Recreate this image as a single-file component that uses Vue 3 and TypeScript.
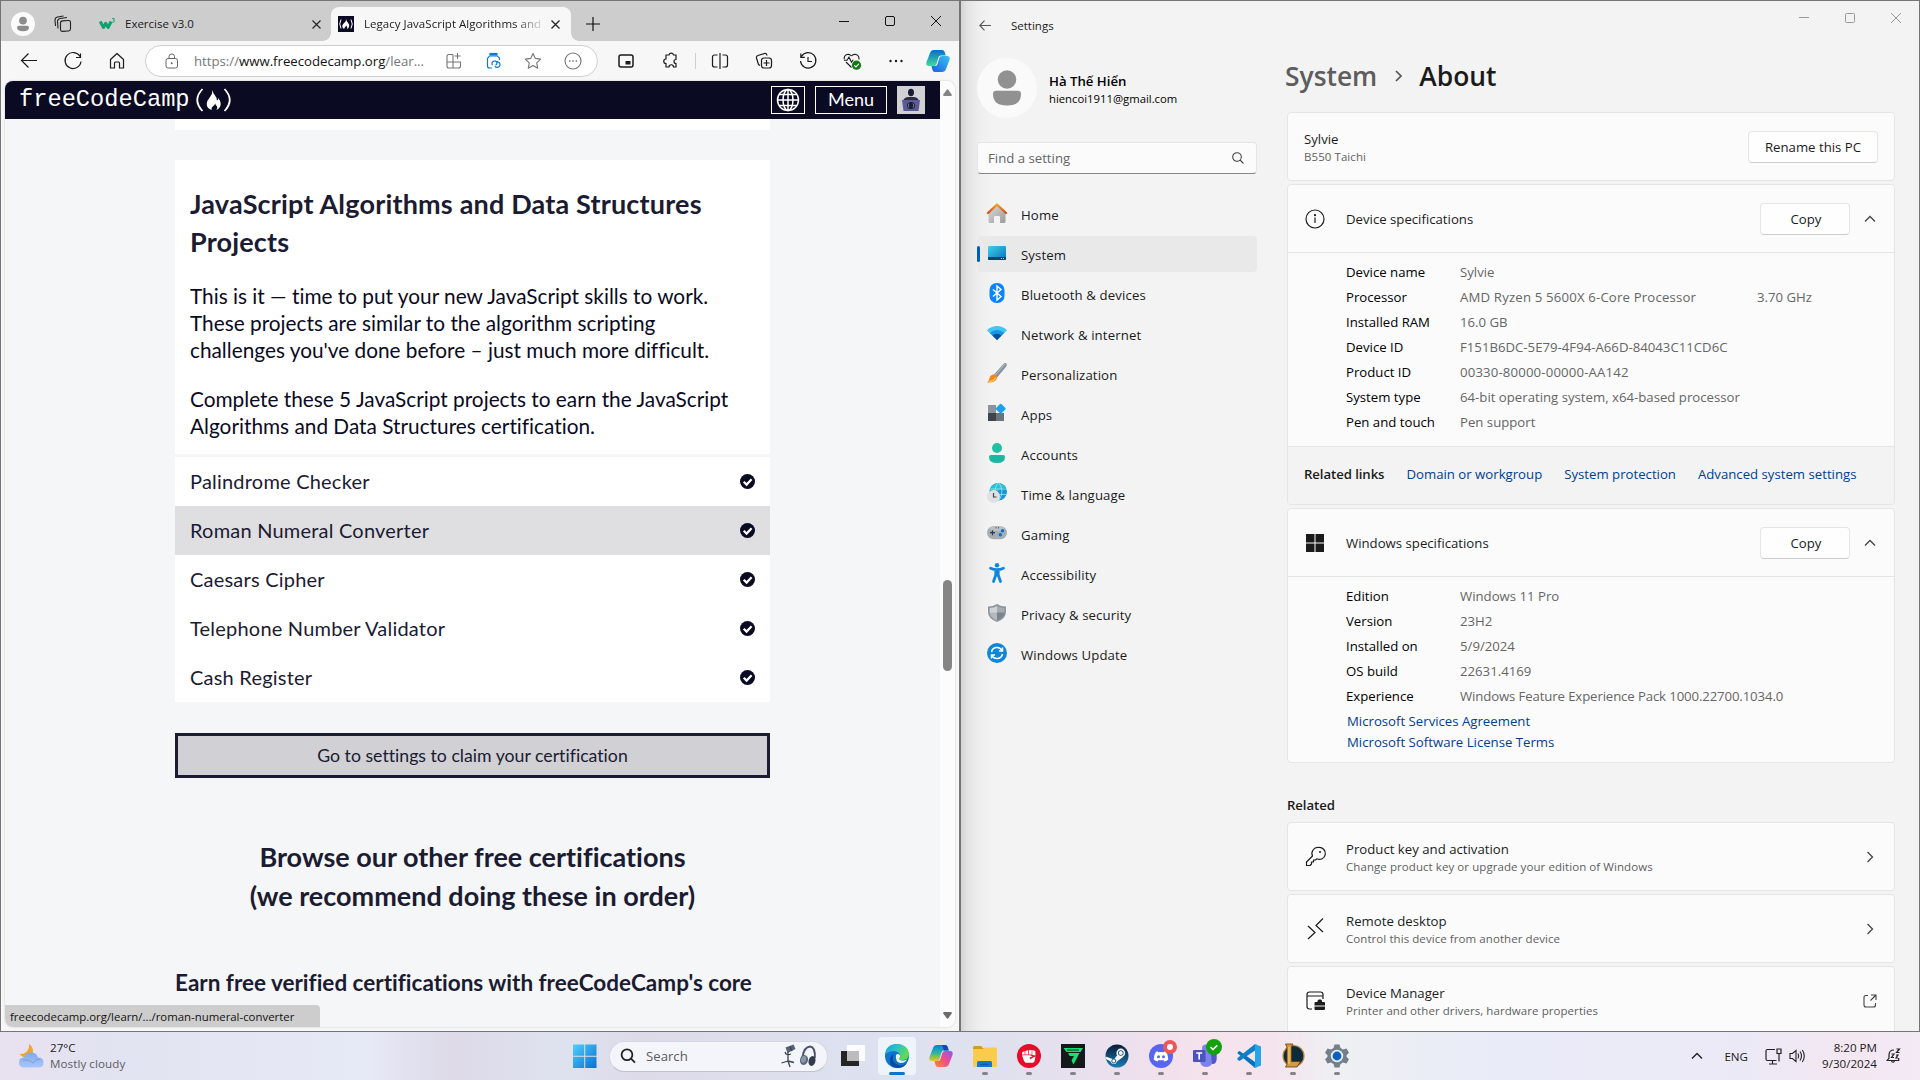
<script setup lang="ts">
interface NavItem { label: string; icon: string; active?: boolean }
interface Spec { label: string; value: string; extra?: string }

const nav: NavItem[] = [
  { label: 'Home', icon: '<defs><linearGradient id="hm" x1="0" y1="0" x2="1" y2="1"><stop offset="0" stop-color="#dcdcdc"/><stop offset="1" stop-color="#9a9a9a"/></linearGradient><linearGradient id="hr" x1="0" y1="0" x2="0" y2="1"><stop offset="0" stop-color="#f7a01b"/><stop offset="1" stop-color="#d9480f"/></linearGradient></defs><path d="M10 2 1.5 10v8.5q0 1.5 1.5 1.5h4v-6q0-1 1-1h4q1 0 1 1v6h4q1.500 0 1.500-1.500V10z" fill="url(#hm)"/><path d="M1 10 10 1.500 19 10" fill="none" stroke="url(#hr)" stroke-width="2.300" stroke-linecap="round" stroke-linejoin="round"/>' },
  { label: 'System', active: true, icon: '<defs><linearGradient id="sy" x1="0" y1="0" x2="1" y2="1"><stop offset="0" stop-color="#37d6e8"/><stop offset="1" stop-color="#0f6cbd"/></linearGradient></defs><rect x="1" y="3" width="18" height="14" rx="1.200" fill="url(#sy)"/><path d="M1 14h18v1.800q0 1.200-1.200 1.200H2.200Q1 17 1 15.800z" fill="#0b4666"/><path d="M14 15.500h1M16 15.500h1" stroke="#9fd9f5"/>' },
  { label: 'Bluetooth & devices', icon: '<rect x="2.500" y="0" width="15" height="20" rx="7" fill="#0a84ff"/><path d="M6 6.500l8 7-4 3.500V3l4 3.500-8 7" fill="none" stroke="#fff" stroke-width="1.400"/>' },
  { label: 'Network & internet', icon: '<path d="M0 7.200Q10-1 20 7.200L10 17z" fill="#3cc8f4"/><path d="M2.700 9.900Q10 4 17.300 9.900L10 17z" fill="#1c94e0"/><path d="M5.500 12.500Q10 8.800 14.500 12.500L10 17z" fill="#0a4fa0"/>' },
  { label: 'Personalization', icon: '<path d="M19.500.500q-1.500-1.200-3.500 1L7 11.500l3 3L18.800 4q1.700-2.200.7-3.500z" fill="#87919c"/><path d="M18 1 8.500 12" stroke="#bcc3c9" stroke-width="1"/><path d="M6.500 11.500q3 0 3.700 3Q9 20 0 19.500q2-1.500 2.500-4.500 1-3.500 4-3.500z" fill="#f7861c"/><path d="M2 18.500q5 0 6.500-4" stroke="#ffc04a" stroke-width="1.500" fill="none"/>' },
  { label: 'Apps', icon: '<path d="M1 2h8v8H1z" fill="#8b949e"/><path d="M1 10h8v8H1z" fill="#3f454b"/><path d="M9 10h8v8H9z" fill="#6b737c"/><rect x="9.900" y="1.900" width="7.600" height="7.600" rx="1" transform="rotate(45 13.700 5.700)" fill="#1ba1f2"/>' },
  { label: 'Accounts', icon: '<circle cx="10" cy="5" r="5" fill="#22bfa5"/><path d="M2 14q0-2 2-2h12q2 0 2 2 0 6-8 6t-8-6z" fill="#1bb8a1"/>' },
  { label: 'Time & language', icon: '<circle cx="11.200" cy="8.800" r="8.800" fill="#1795d4"/><path d="M3 6Q6 0 11 0t8 4.500Q12 6 9 10z" fill="#2fc1d2"/><path d="M2.500 6h17M3 11.500h16.500M11 0q-6 8 0 17.500M12 0q6 8 0 17.500" stroke="#8de0ef" stroke-width=".900" fill="none"/><circle cx="6.500" cy="13.500" r="6.500" fill="#dfe1e3"/><path d="M6.500 10v4H9.500" stroke="#444" stroke-width="1.200" fill="none"/>' },
  { label: 'Gaming', icon: '<rect x="0" y="3.200" width="20" height="13" rx="6.500" fill="#a5adb5"/><path d="M2 5Q10 1 18 5L14 8H5z" fill="#b9c0c6"/><path d="M5.500 7.200v5M3 9.700h5" stroke="#333a41" stroke-width="1.300"/><path d="M8.500 4.800h1M11 4.800h1" stroke="#333a41"/><circle cx="15.500" cy="7.800" r="1.700" fill="#0e6fc8"/><circle cx="13.300" cy="11.800" r="1.700" fill="#0e6fc8"/>' },
  { label: 'Accessibility', icon: '<circle cx="10" cy="2.300" r="2.200" fill="#0e86dd"/><path d="M3.500 5.200Q10 8 16.500 5.200M8.800 7.500V12L6.500 18.500M11.200 7.500V12l2.300 6.500" fill="none" stroke="#0e86dd" stroke-width="2.800" stroke-linecap="round" stroke-linejoin="round"/>' },
  { label: 'Privacy & security', icon: '<path d="M10 1q4 2.500 9 2.500V9q0 6.500-9 10Q1 15.500 1 9V3.500Q6 3.500 10 1z" fill="#8d969e"/><path d="M10 3q3 2 7.300 2v5H10z" fill="#a4abb2"/><path d="M10 3Q7 5 2.700 5v5H10z" fill="#cfd3d6"/><path d="M2.700 9.500H10V17.500Q3 14.500 2.700 9.500z" fill="#b3b9be"/><path d="M17.300 9.500H10V17.500Q17 14.500 17.300 9.500z" fill="#7b848c"/>' },
  { label: 'Windows Update', icon: '<circle cx="10" cy="10" r="10" fill="#0f86d9"/><path d="M4.500 9a5.600 5.600 0 0 1 10.500-1.500M15.500 4.500V8H12M15.500 11A5.600 5.600 0 0 1 5 12.500M4.500 15.500V12H8" fill="none" stroke="#fff" stroke-width="1.500"/>' },
]

const deviceSpecs: Spec[] = [
  { label: 'Device name', value: 'Sylvie' },
  { label: 'Processor', value: 'AMD Ryzen 5 5600X 6-Core Processor', extra: '3.70 GHz' },
  { label: 'Installed RAM', value: '16.0 GB' },
  { label: 'Device ID', value: 'F151B6DC-5E79-4F94-A66D-84043C11CD6C' },
  { label: 'Product ID', value: '00330-80000-00000-AA142' },
  { label: 'System type', value: '64-bit operating system, x64-based processor' },
  { label: 'Pen and touch', value: 'Pen support' },
]

const windowsSpecs: Spec[] = [
  { label: 'Edition', value: 'Windows 11 Pro' },
  { label: 'Version', value: '23H2' },
  { label: 'Installed on', value: '5/9/2024' },
  { label: 'OS build', value: '22631.4169' },
  { label: 'Experience', value: 'Windows Feature Experience Pack 1000.22700.1034.0' },
]

const related = [
  { title: 'Product key and activation', sub: 'Change product key or upgrade your edition of Windows', ext: false,
    icon: '<path d="M13.500 1.500a6 6 0 1 1-1.800 11.300L10.500 14H8.500v2H6.500v2L5 19.500H1.500V16l6-6a6 6 0 0 1 6-8.500z" stroke-linejoin="round"/><circle cx="15" cy="6" r="1" fill="#1b1b1b" stroke="none"/>' },
  { title: 'Remote desktop', sub: 'Control this device from another device', ext: false,
    icon: '<path d="M3 8l7 6.500-7 6.500M18 .5 11 7.500l7 6.500"/>' },
  { title: 'Device Manager', sub: 'Printer and other drivers, hardware properties', ext: true,
    icon: '<path d="M7 19H4.500Q2 19 2 16.500V4.500Q2 2 4.500 2h11Q18 2 18 4.500V9M2 6h16"/><path d="M9.500 13q0-1 1-1h2v-1q0-1.500 1.500-1.500h1.500q1.500 0 1.500 1.500v1h2q1 0 1 1v2.500h-10.500zM9.500 16.500H20V19q0 1-1 1h-8.500q-1 0-1-1z" fill="#1b1b1b" stroke="none"/>' },
]

const projects = ['Palindrome Checker', 'Roman Numeral Converter', 'Caesars Cipher', 'Telephone Number Validator', 'Cash Register']

const apps: { name: string; icon: string; running: boolean }[] = [
  { name: 'copilot', running: false, icon: '<defs><linearGradient id="c1" x1="0" y1="0" x2="0" y2="1"><stop offset="0" stop-color="#0a7be0"/><stop offset=".5" stop-color="#2cb5a0"/><stop offset="1" stop-color="#f2c811"/></linearGradient><linearGradient id="c2" x1="0" y1="1" x2="1" y2="0"><stop offset="0" stop-color="#f98a2b"/><stop offset=".5" stop-color="#ee4f8b"/><stop offset="1" stop-color="#a34bf0"/></linearGradient></defs><path d="M8 1h8q2 0 2.700 2l1 3.500H15q-2 0-2.600 2L10.500 15q-.7 2-2.500 2H3q-3.500 0-2.500-4L4 4q1-3 4-3z" fill="url(#c1)"/><path d="M13 1h3q2 0 2.700 2l1 3.500H15z" fill="#1745b8"/><path d="M16 23H9q-2 0-2.700-2.500L5.500 17H9q2 0 2.500-2l2-6.500Q14 7 16 7h5q3.500 0 2.500 4L20 20q-1 3-4 3z" fill="url(#c2)"/>' },
  { name: 'explorer', running: true, icon: '<path d="M0 3.500Q0 2 1.500 2H8l3 3H0z" fill="#d99a14"/><path d="M0 5h10l2-1.500h10.500Q24 3.500 24 5v16.500Q24 23 22.500 23h-21Q0 23 0 21.500z" fill="#fbcb4b"/><path d="M4 23v-4.500Q4 17 5.500 17h12q1.500 0 1.500 1.500V23z" fill="#1777cf"/><path d="M7.500 20.500h8" stroke="#0d5aa5" stroke-width="1.500"/>' },
  { name: 'fist', running: true, icon: '<circle cx="12" cy="12" r="12" fill="#ea0a2a"/><path d="M5 8.500 7.500 7l.3 3.500H5zM8.300 7 11 6.300v4.200H8.300zM11.700 6.300l3-.3v4.500h-3zM15.300 6l3 1 .2 4.500-3.200-.5zM5 11.300h8l2.500 1-3 1.500 1 1.500 3-2 2-.8-1 5-1.500 1.300H8.500L7 17z" fill="#fff"/>' },
  { name: 'vulcan', running: true, icon: '<path d="M0 0h24v24H0z" fill="#15191b"/><path d="M2.500 4h19.500L19.500 8h-14zM7 9h11.500L12.500 20.500 10.500 16.500 13 12H8.700z" fill="#16e070"/><path d="M6 6h12" stroke="#0d5430" stroke-width="1.300"/>' },
  { name: 'steam', running: true, icon: '<defs><linearGradient id="st" x1="0" y1="0" x2="0" y2="1"><stop offset="0" stop-color="#0b1a38"/><stop offset="1" stop-color="#1a7cb2"/></linearGradient></defs><circle cx="12" cy="12" r="11.500" fill="url(#st)"/><path d="M.500 12.500 9 15.500l4-5.500 5 3-6 4.500q-1 3-3.500 2.500t-3-2.500L1 15z" fill="#f4f7fa"/><circle cx="15.800" cy="9" r="4.400" fill="#f4f7fa"/><circle cx="15.800" cy="9" r="2.800" fill="#254a73"/><circle cx="15.800" cy="9" r="2" fill="#f4f7fa"/><circle cx="8.800" cy="17" r="2" fill="#fff" stroke="#1a5c8a"/>' },
  { name: 'discord', running: true, icon: '<circle cx="12" cy="12" r="12" fill="#5865f2"/><path d="M8.500 7.200 7 7.800Q4.700 11 4.700 15.500q1.500 1.500 4 2l1-1.500q2.300.5 4.600 0l1 1.500q2.500-.5 4-2Q19.300 11 17 7.800l-1.500-.6-.8 1q-2.700-.4-5.400 0z" fill="#fff"/><circle cx="9.500" cy="12.800" r="1.500" fill="#5865f2"/><circle cx="14.500" cy="12.800" r="1.500" fill="#5865f2"/><circle cx="21" cy="3" r="7" fill="#ee5555"/><circle cx="21" cy="3" r="3" fill="#fff"/>' },
  { name: 'teams', running: true, icon: '<circle cx="13" cy="4.500" r="4" fill="#7b83eb"/><path d="M8 8h12q3.500 0 3.500 2v5q0 5-4.500 5-2 3-6 3-6 0-6-7z" fill="#7b83eb"/><path d="M18 9h5.500v6q0 5-4.500 5z" fill="#5059c9"/><rect x="0" y="6" width="12.500" height="12" rx="1" fill="#4b53bc"/><path d="M3.200 9h6M6.200 9v6.500" stroke="#fff" stroke-width="1.600"/><circle cx="21" cy="3" r="8" fill="#13a10e"/><path d="M17.500 3l2.500 2.500 4.300-4.300" stroke="#fff" stroke-width="1.600" fill="none"/>' },
  { name: 'code', running: true, icon: '<path d="M.8 9.500.5 8.300 2.500 7 18 18v6z" fill="#0a72b8"/><path d="M18 0 .5 14v1.700L2.500 17 18 6.500z" fill="#0f7fc9"/><path d="M18 0 24 2.500v19L18 24 16.500 23.200 18 22z" fill="#26a3ea"/>' },
  { name: 'league', running: true, icon: '<circle cx="12.500" cy="12" r="10.500" fill="#0c2b3c" stroke="#b58a3a" stroke-width="1.200"/><path d="M4.500 0H12l-1.500 2.500V17.500h9L16 23H4.500L6 20.500V3z" fill="#d59a3f" stroke="#5c3b12" stroke-width=".800"/><path d="M8 3v17" stroke="#f2cc7c" stroke-width="1.200"/>' },
  { name: 'settings', running: true, icon: '<path d="M9.500.500h5l1 3.500 2.500 1.500L21.500 4.500l2.500 4.300-2.500 2.400v1.600l2.500 2.400-2.500 4.300-3.500-1-2.500 1.500-1 3.500h-5l-1-3.500L6 18.500l-3.500 1L0 15.200l2.500-2.400v-1.600L0 8.800l2.500-4.300 3.500 1L8.500 4z" fill="#737f89"/><circle cx="12" cy="12" r="6.200" fill="#e8edf0"/><circle cx="12" cy="12" r="4.400" fill="#0b62bd"/>' },
]
</script>

<template>
  <div class="desktop">
    <div class="windows">
      <section class="browser">
        <div class="tabs">
          <div class="profile"><svg width="24" height="24" viewBox="0 0 24 24"><circle cx="12" cy="12" r="12" fill="#fbfbfb"/><circle cx="12" cy="8.600" r="3.900" fill="#8c8c8c"/><path d="M6 15.500q0-1.700 1.700-1.700h8.600q1.700 0 1.700 1.700 0 3.700-6 3.700t-6-3.700z" fill="#8c8c8c"/></svg></div>
          <svg class="workspaces" width="18" height="18" viewBox="0 0 18 18" fill="none" stroke="#222" stroke-width="1.100"><rect x="6.500" y="5.500" width="10" height="10.500" rx="2" transform="skewY(-4) translate(0 1)"/><path d="M4 13.500l-.500-7Q3.500 4 6 3.500l7-1"/><path d="M1.500 11 1 5q0-2.500 2.500-3l6-1"/></svg>
          <div class="tab idle">
            <svg width="17" height="12" viewBox="0 0 17 12"><path d="M1.200 3.500l3.300 6 2.200-4.200 2.400 4.200 3-6" fill="none" stroke="#0ba470" stroke-width="3" stroke-linejoin="round"/><path d="M13 .600h2.500L14.300 2.200q1.500 0 1.300 1.300-.5 1-2.300.5" fill="none" stroke="#0ba470" stroke-width=".900"/></svg>
            <span class="tab-name">Exercise v3.0</span>
            <svg width="9" height="9" viewBox="0 0 9 9" stroke="#222" stroke-width="1.100"><path d="M.500.500l8 8M8.500.500l-8 8"/></svg>
          </div>
          <div class="tab current">
            <svg width="16" height="16" viewBox="0 0 16 16"><path d="M0 0h16v16H0z" fill="#0a0a23"/><path d="M3 3.500Q.500 8 3 12.500M13 3.500Q15.500 8 13 12.500" stroke="#fff" fill="none"/><path d="M8 2.800q.2 2 2 4t1 4.300q-.5 1.500-2 2 1-2-.8-3.500-.2 1-1.400 1.800t-.2 1.800q-2.500-.8-2.400-3.400Q4.800 8 6.600 6.500T8 2.800z" fill="#fff"/></svg>
            <span class="tab-name fade">Legacy JavaScript Algorithms and</span>
            <svg width="9" height="9" viewBox="0 0 9 9" stroke="#222" stroke-width="1.300"><path d="M.500.500l8 8M8.500.500l-8 8"/></svg>
          </div>
          <svg class="plus" width="14" height="14" viewBox="0 0 14 14" stroke="#111" stroke-width="1.200"><path d="M7 0v14M0 7h14"/></svg>
          <div class="controls">
            <svg viewBox="0 0 46 30" fill="none" stroke="#111"><path d="M18 15.500h10"/></svg>
            <svg viewBox="0 0 46 30" fill="none" stroke="#111"><rect x="18.500" y="10.500" width="9" height="9" rx="1.500"/></svg>
            <svg viewBox="0 0 46 30" fill="none" stroke="#111"><path d="M18 10l10 10M28 10 18 20"/></svg>
          </div>
        </div>

        <div class="toolbar">
          <svg class="cell" viewBox="0 0 44 40" fill="none" stroke="#1b1b1b" stroke-width="1.200"><path d="M37.500 20H22M29 13l-7 7 7 7" transform="translate(-7.500 -.500)"/></svg>
          <svg class="cell" viewBox="0 0 44 40" fill="none" stroke="#1b1b1b" stroke-width="1.200"><path d="M29 15.500a8 8 0 1 0 1 5M29.500 12.500v4H25"/></svg>
          <svg class="cell" viewBox="0 0 44 40" fill="none" stroke="#1b1b1b" stroke-width="1.200"><path d="M15.500 18.500 22 12.500l6.500 6V27h-4v-5q0-1-1-1h-3q-1 0-1 1v5h-4z" stroke-linejoin="round"/></svg>
          <div class="address">
            <svg class="lock" width="14" height="16" viewBox="0 0 14 16" fill="none" stroke="#666"><rect x="1" y="5.500" width="11.500" height="9.500" rx="2"/><path d="M4 5.500V3.500Q4 1 6.750 1T9.500 3.500v2"/><circle cx="6.750" cy="10.200" r=".600" fill="#555"/></svg>
            <span class="url">https://<b>www.freecodecamp.org</b>/lear...</span>
            <svg class="cell40" viewBox="0 0 40 30" fill="none" stroke="#767676" stroke-width="1.100"><path d="M20 8.500h-4q-2 0-2 2V20q0 2 2 2h9.500q2 0 2-2v-4H14M20 8.500V22M24.500 7v6M21.500 10h6"/></svg>
            <svg class="cell40" viewBox="0 0 40 30" fill="none" stroke="#0a78d4" stroke-width="1.200"><path d="M19 22h-2.500q-2 0-2-2v-7.500l2-2.500h8l2 2.500V14"/><path d="M16.500 8.200h8" stroke-width="2.600"/><path d="M19.500 19.200a2.600 2.600 0 1 1 4.500-2.500q0 1.500-1.500 2.600M23 16a2.800 2.800 0 1 1 1.500 5.300q-1.700.2-2.700-1"/></svg>
            <svg class="cell40" viewBox="0 0 40 30" fill="none" stroke="#767676" stroke-width="1.100"><path d="M20 7.500l2.300 4.900 5.400.700-4 3.700 1 5.400-4.700-2.700-4.700 2.700 1-5.400-4-3.700 5.400-.700z" stroke-linejoin="round"/></svg>
            <svg class="cell40" viewBox="0 0 40 30" fill="none" stroke="#767676" stroke-width="1.100"><circle cx="20" cy="15" r="8"/><path d="M16 15h1.500M19.300 15h1.500M22.600 15H24" stroke-width="1.600"/></svg>
          </div>
          <svg class="cell first" viewBox="0 0 44 40" fill="none" stroke="#1b1b1b" stroke-width="1.200"><rect x="15" y="14" width="14" height="12" rx="2" stroke-width="1.500"/><rect x="21.500" y="20" width="5" height="3.500" fill="#1b1b1b" stroke="none"/></svg>
          <svg class="cell" viewBox="0 0 44 40" fill="none" stroke="#1b1b1b" stroke-width="1.200"><path d="M18.500 15h3a2.300 2.300 0 0 1 4.500 0h2.500v4.500a2 2 0 0 0 0 4V27H26a2.200 2.200 0 0 0-4.500 0h-3v-3.500a2.200 2.200 0 1 1 0-4.500z" transform="translate(-.500 -1)"/></svg>
          <i class="sep"></i>
          <svg class="cell" viewBox="0 0 44 40" fill="none" stroke="#1b1b1b" stroke-width="1.200"><path d="M22 12v16M19.500 14H16.500q-2 0-2 2v8q0 2 2 2h3M24.500 14h3q2 0 2 2v8q0 2-2 2h-3"/></svg>
          <svg class="cell" viewBox="0 0 44 40" fill="none" stroke="#1b1b1b" stroke-width="1.200"><rect x="19.500" y="17" width="10" height="10" rx="2.500"/><path d="M24.500 19v6M21.500 22h6M18 24.500l-1.500-1L14.500 17q-.5-2 1.500-2.500l6.500-2q2-.5 2.500 2"/></svg>
          <svg class="cell" viewBox="0 0 44 40" fill="none" stroke="#1b1b1b" stroke-width="1.200"><path d="M15.500 15.500a7.700 7.700 0 1 1-1 4.500M14.800 12.500v3.800h4M22 16v4.500h4"/></svg>
          <svg class="cell" viewBox="0 0 44 40" fill="none" stroke="#1b1b1b" stroke-width="1.100"><path d="M21.500 26.500 16 21M21.500 15q-2-2.200-4.500-1.500-3.200 1-2.800 4.800M29 18.500q.3-4-3-5-2.500-.7-4.500 1.500M14 19.200h3l2-3 2.500 5 1.700-2.500"/><circle cx="26.500" cy="24.200" r="4.600" fill="#107c10" stroke="none"/><path d="M24.300 24.300l1.600 1.600 3-3" stroke="#fff"/></svg>
          <svg class="cell" viewBox="0 0 44 40" fill="#1b1b1b"><circle cx="16.500" cy="20" r="1.200"/><circle cx="22" cy="20" r="1.200"/><circle cx="27.500" cy="20" r="1.200"/></svg>
          <svg class="cell narrow" viewBox="0 0 40 40"><defs><linearGradient id="k1" x1="0" y1="0" x2="0" y2="1"><stop offset="0" stop-color="#0a6bcb"/><stop offset="1" stop-color="#3fdc9d"/></linearGradient><linearGradient id="k2" x1="0" y1="1" x2="1" y2="0"><stop offset="0" stop-color="#1f5de0"/><stop offset="1" stop-color="#36c4f3"/></linearGradient></defs><path d="M16 9h8q2 0 2.700 2l1 3.500H23q-2 0-2.600 2L18.500 23q-.7 2-2.500 2h-5q-3.500 0-2.500-4L12 12q1-3 4-3z" fill="url(#k1)"/><path d="M24 31h-7q-2 0-2.700-2.500l-.8-3.500H17q2 0 2.500-2l2-6.500Q22 15 24 15h5q3.500 0 2.500 4L28 28q-1 3-4 3z" fill="url(#k2)"/></svg>
        </div>

        <div class="page">
          <div class="doc">
            <header class="fcc">
              <span class="logo">freeCodeCamp</span>
              <svg class="flame" width="36" height="26" viewBox="0 0 36 26"><path d="M7 2Q-3.500 13 7 24M29 2Q39.500 13 29 24" transform="translate(.500 0)" fill="none" stroke="#fff" stroke-width="1.800"/><path d="M17.500 3q.3 3.500 3 6.200 2 2.300 1.400 4.300 1.500-.5 1.300-2.500 2.600 3 2.500 6-.2 4-4.300 6 1.500-2 .5-3.800-1.500-.8-1.600-2.700-.8 2-2.600 3t-1 3.500q-5-1.500-5-6.200 0-2.800 3-6.300t2.800-7.500z" fill="#fff"/></svg>
              <span class="grow"></span>
              <span class="lang"><svg width="24" height="24" viewBox="0 0 24 24" fill="none" stroke="#fff" stroke-width="1.500"><circle cx="12" cy="12" r="10.500"/><ellipse cx="12" cy="12" rx="5" ry="10.500"/><path d="M12 1.500v21M1.500 12h21M3 6.500h18M3 17.500h18"/></svg></span>
              <span class="menu">Menu</span>
              <span class="avatar"><svg width="28" height="28" viewBox="0 0 28 28"><path d="M0 0h28v28H0z" fill="#d0d0d5"/><ellipse cx="14" cy="6.500" rx="3" ry="3.700" fill="#1b1b32"/><path d="M6 15q1-4 6-4h4q5 0 6 4z" fill="#2a2a40"/><path d="M5 14h18l-1.500 11h-15z" fill="#5a5a96"/><ellipse cx="14" cy="19.500" rx="4" ry="3.500" fill="#1b1b32"/><path d="M12 17.500q-1.500 2 0 4M16 17.500q1.500 2 0 4" stroke="#9a9ac8" fill="none" stroke-width=".800"/></svg></span>
            </header>
            <main class="column">
              <div class="prev"></div>
              <div class="block">
                <h2 class="title">JavaScript Algorithms and Data Structures Projects</h2>
                <p>This is it — time to put your new JavaScript skills to work.<br>These projects are similar to the algorithm scripting<br>challenges you've done before – just much more difficult.</p>
                <p>Complete these 5 JavaScript projects to earn the JavaScript<br>Algorithms and Data Structures certification.</p>
              </div>
              <ul class="projects">
                <li v-for="(p, i) in projects" :key="p" :class="{ hover: i === 1 }">
                  <span>{{ p }}</span>
                  <svg width="15" height="15" viewBox="0 0 15 15"><circle cx="7.500" cy="7.500" r="7.500" fill="#0a0a23"/><path d="M3.700 7.700l2.900 2.900 5-5.400" fill="none" stroke="#fff" stroke-width="2.200"/></svg>
                </li>
              </ul>
              <div class="claim">Go to settings to claim your certification</div>
              <h2 class="browse">Browse our other free certifications<br>(we recommend doing these in order)</h2>
              <h3>Earn free verified certifications with freeCodeCamp's core</h3>
            </main>
          </div>
          <div class="scroll">
            <svg width="9" height="7" viewBox="0 0 9 7"><path d="M3.500 1q1-1.300 2 0L8.700 5.500q.5 1.500-1 1.500H1.300q-1.500 0-1-1.500z" fill="#858585"/></svg>
            <i class="thumb"></i>
            <svg width="9" height="7" viewBox="0 0 9 7"><path d="M3.500 6q1 1.300 2 0L8.700 1.500Q9.200 0 7.700 0H1.300q-1.500 0-1 1.500z" fill="#6a6a6a"/></svg>
          </div>
          <div class="status"><span>freecodecamp.org/learn/.../roman-numeral-converter</span></div>
        </div>
      </section>

      <section class="settings">
        <div class="titlebar">
          <svg width="12" height="11" viewBox="0 0 12 11" fill="none" stroke="#555" stroke-width="1.100"><path d="M12 5.500H.800M5.500.700.800 5.500l4.700 4.800"/></svg>
          <span class="name12">Settings</span>
          <div class="controls pale">
            <svg viewBox="0 0 46 30" fill="none" stroke="#999"><path d="M18 15.500h10"/></svg>
            <svg viewBox="0 0 46 30" fill="none" stroke="#999"><rect x="18.500" y="11.500" width="9" height="9" rx="1"/></svg>
            <svg viewBox="0 0 46 30" fill="none" stroke="#999"><path d="M18 11l10 10M28 11 18 21"/></svg>
          </div>
        </div>
        <div class="panes">
          <aside>
            <div class="user">
              <svg width="60" height="60" viewBox="0 0 60 60"><circle cx="30" cy="30" r="30" fill="#fafafa"/><circle cx="30" cy="21.500" r="9.300" fill="#919191"/><path d="M16 36q0-3.300 3.300-3.300h21.400Q44 32.700 44 36q0 11.500-14 11.500T16 36z" fill="#919191"/></svg>
              <div><div class="who">Hà Thế Hiển</div><div class="mail">hiencoi1911@gmail.com</div></div>
            </div>
            <div class="find"><span>Find a setting</span><svg width="12" height="12" viewBox="0 0 12 12" fill="none" stroke="#444" stroke-width="1.100"><circle cx="5" cy="5" r="4.300"/><path d="M8 8l3.500 3.500"/></svg></div>
            <nav>
              <div v-for="n in nav" :key="n.label" class="nav-item" :class="{ active: n.active }">
                <svg width="20" height="20" viewBox="0 0 20 20" v-html="n.icon"></svg>
                <span>{{ n.label }}</span>
              </div>
            </nav>
          </aside>
          <div class="content">
            <div class="crumb"><span class="parent">System</span><svg width="7" height="12" viewBox="0 0 7 12" fill="none" stroke="#555" stroke-width="1.700"><path d="M1 1l5 5-5 5"/></svg><span class="here">About</span></div>
            <div class="card pc">
              <div><div class="t14">Sylvie</div><div class="t12">B550 Taichi</div></div>
              <span class="btn rename">Rename this PC</span>
            </div>
            <div class="card">
              <div class="head">
                <svg width="20" height="20" viewBox="0 0 20 20" fill="none" stroke="#1b1b1b" stroke-width="1.200"><circle cx="10" cy="10" r="9"/><path d="M10 8.500V14"/><circle cx="10" cy="6.200" r=".500" fill="#1b1b1b"/></svg>
                <span class="t14 grow">Device specifications</span>
                <span class="btn copy">Copy</span>
                <svg width="12" height="8" viewBox="0 0 12 8" fill="none" stroke="#444" stroke-width="1.300"><path d="M1 6.500l5-5 5 5"/></svg>
              </div>
              <div class="specs device">
                <div v-for="s in deviceSpecs" :key="s.label" class="spec"><span class="label">{{ s.label }}</span><span class="value">{{ s.value }}</span><span v-if="s.extra" class="extra">{{ s.extra }}</span></div>
              </div>
              <div class="links"><b>Related links</b><a>Domain or workgroup</a><a>System protection</a><a>Advanced system settings</a></div>
            </div>
            <div class="card">
              <div class="head">
                <svg width="20" height="20" viewBox="0 0 20 20" fill="#1b1b1b"><path d="M1 1h8.500v8.500H1zM10.500 1H19v8.500h-8.500zM1 10.500h8.500V19H1zM10.500 10.500H19V19h-8.500z"/></svg>
                <span class="t14 grow">Windows specifications</span>
                <span class="btn copy">Copy</span>
                <svg width="12" height="8" viewBox="0 0 12 8" fill="none" stroke="#444" stroke-width="1.300"><path d="M1 6.500l5-5 5 5"/></svg>
              </div>
              <div class="specs win">
                <div v-for="s in windowsSpecs" :key="s.label" class="spec"><span class="label">{{ s.label }}</span><span class="value">{{ s.value }}</span></div>
                <div class="terms"><a>Microsoft Services Agreement</a><a>Microsoft Software License Terms</a></div>
              </div>
            </div>
            <div class="related">Related</div>
            <div v-for="r in related" :key="r.title" class="card more">
              <svg width="21" height="21" viewBox="0 0 21 21" fill="none" stroke="#1b1b1b" stroke-width="1.200" v-html="r.icon"></svg>
              <div class="grow"><div class="t14">{{ r.title }}</div><div class="t12">{{ r.sub }}</div></div>
              <svg v-if="!r.ext" width="14" height="12" viewBox="0 0 14 12" fill="none" stroke="#444" stroke-width="1.300"><path d="M4.500 1l5 5-5 5"/></svg>
              <svg v-else width="14" height="14" viewBox="0 0 14 14" fill="none" stroke="#444" stroke-width="1.100"><path d="M5 1.500H3Q1 1.500 1 3.500V11q0 2 2 2h7.500q2 0 2-2V9M8 1h5v5M13 1 7.500 6.500"/></svg>
            </div>
          </div>
        </div>
      </section>
    </div>

    <footer class="taskbar">
      <div class="weather">
        <svg width="25" height="25" viewBox="0 0 25 25"><defs><linearGradient id="cl" x1="0" y1="0" x2="0" y2="1"><stop offset="0" stop-color="#7fa9ec"/><stop offset="1" stop-color="#a9c6f8"/></linearGradient></defs><path d="M10 0q4 2.500 4 7t-5 7q-4 1-8.500-4Q5 10.500 7.700 7.500T10 0z" fill="#f5a623"/><path d="M5 23.500q-5 0-5-5t5-5Q6.500 8.500 12 8.500t7 5q5.500 0 5.500 5t-5 5z" fill="url(#cl)"/><path d="M4 16q6-1 10 3 2-4 7-4" fill="none" stroke="#6f96da" stroke-width=".800"/></svg>
        <div><div>27°C</div><div class="dim">Mostly cloudy</div></div>
      </div>
      <div class="dock">
        <svg class="start" width="24" height="24" viewBox="0 0 24 24"><defs><linearGradient id="wn" x1="0" y1="0" x2="1" y2="1"><stop offset="0" stop-color="#4fd0fb"/><stop offset="1" stop-color="#0a6fd0"/></linearGradient></defs><path d="M0 .500h11.200V11.700H0zM12.200.500h11.300V11.700H12.200zM0 12.700h11.200V24H0zM12.200 12.700h11.300V24H12.200z" fill="url(#wn)"/></svg>
        <div class="search">
          <svg width="16" height="16" viewBox="0 0 16 16" fill="none" stroke="#222" stroke-width="1.800"><circle cx="7" cy="6.700" r="5.400"/><path d="M11 10.700l4 4"/></svg>
          <span>Search</span>
          <svg width="38" height="24" viewBox="0 0 38 24"><path d="M5.500 3.500 13.500.5l2 4.500-8 4z" fill="#566175"/><path d="M5 8q1 4 6 2M8 8v10M8 17l-6.500 2M8 17l6 1.500M8 17l2 6M10 2.500l2 4.500" stroke="#3b4454" stroke-width="1.300" fill="none"/><path d="M22.500 13Q24 3 30 2.500q5.500.5 4.800 11.500" fill="none" stroke="#4a566b" stroke-width="2"/><ellipse cx="24" cy="16" rx="4" ry="5" fill="#5b677d" transform="rotate(15 24 16)"/><ellipse cx="23.500" cy="15.500" rx="2.500" ry="3.500" fill="#8c97ab" transform="rotate(15 24 16)"/><ellipse cx="32" cy="17" rx="3.400" ry="5" fill="#333c4b" transform="rotate(15 32 17)"/></svg>
        </div>
        <svg class="view" width="24" height="24" viewBox="0 0 24 24"><path d="M0 7h18v15H0z" fill="#252525"/><path d="M6 1h18v16H6z" fill="#fff" opacity=".900"/><path d="M6 7h12v10H6z" fill="#bcbcbc"/></svg>
        <div class="edge">
          <svg width="24" height="24" viewBox="0 0 24 24"><defs><linearGradient id="e1" x1="0" y1="0" x2="1" y2=".4"><stop offset="0" stop-color="#1c9de0"/><stop offset=".5" stop-color="#2bc3c8"/><stop offset="1" stop-color="#5fdc4e"/></linearGradient></defs><circle cx="12" cy="12" r="12" fill="#0d74cf"/><path d="M0 11Q1 0 12 0q11 .5 12 10 0 5-5.500 6-5 .5-4.500-2 1.500-1 1-3Q14 7.500 9.500 7 3 7 0 11z" fill="url(#e1)"/><path d="M8 12q-1.500 8 7 9.500 4 .5 7-3-2.500 5.500-10 5.500Q4 23 5 15q1-4 4.500-6-1.500 1.500-1.500 3z" fill="#0a4a9e"/><path d="M11 11q2-2 4 .500.500 1.500-1 3 .5 2.500 5 2 2-.5 3-1-2 3.500-6.500 3.500Q10 18 11 11z" fill="#eff3f8"/></svg>
        </div>
        <div v-for="a in apps" :key="a.name" class="app"><svg width="24" height="24" viewBox="0 0 24 24" v-html="a.icon"></svg><i v-if="a.running"></i></div>
      </div>
      <div class="tray">
        <svg width="12" height="8" viewBox="0 0 12 8" fill="none" stroke="#222" stroke-width="1.400"><path d="M1 6.500l5-5 5 5"/></svg>
        <span class="eng">ENG</span>
        <svg width="17" height="17" viewBox="0 0 17 17" fill="none" stroke="#222" stroke-width="1.200"><path d="M10 1.500H2.500q-1.500 0-1.500 1.500v8q0 1.500 1.500 1.500h9M7.500 12.500V16M4 16h8M12 1h4v4.500h-4zM14 5.500v8"/></svg>
        <svg class="speaker" width="17" height="16" viewBox="0 0 17 16" fill="none" stroke="#222" stroke-width="1.100"><path d="M1 5.500h2.500L7 2.500v11l-3.500-3H1zM9 5.500q1.500 2.500 0 5M11 3.500q3 4.500 0 9M13.300 2q4 6 0 12"/></svg>
        <div class="clock"><div>8:20 PM</div><div>9/30/2024</div></div>
        <svg class="bell" width="15" height="16" viewBox="0 0 15 16" fill="none" stroke="#222" stroke-width="1.200"><path d="M8 2Q3 2 3 7v3L1.200 12.500h11.500V10M5.500 13q1.500 2.500 3 0M5.500 6H8L5.500 9.500H8M10.500 1h3l-3 3.500h3M10 7h2l-2 3h2"/></svg>
      </div>
    </footer>
  </div>
</template>

<style>
html, body { margin: 0; overflow: hidden; }
</style>

<style scoped>
* { box-sizing: border-box; }
svg { display: block; flex: none; overflow: visible; }
.desktop { width: 1920px; height: 1080px; display: flex; flex-direction: column; overflow: hidden; font-family: "Open Sans", "Noto Sans", sans-serif; font-size: 13.200px; color: #1b1b1b; white-space: nowrap; background: #f3f3f3; }
.windows { height: 1032px; display: flex; }
.grow { flex: 1; }

.browser { width: 960px; height: 1032px; border: 1px solid #757575; background: #f7f7f7; }
.tabs { height: 40px; background: #cdcdcd; display: flex; align-items: center; position: relative; }
.profile { margin: 6px 0 0 10px; }
.workspaces { margin: 6px 0 0 19px; }
.tab { display: flex; align-items: center; font-size: 11.500px; }
.tab.idle { width: 259px; height: 34px; padding: 0 10px 0 27px; align-self: flex-end; }
.tab.current { width: 240px; height: 34px; align-self: flex-end; background: #f7f7f7; border-radius: 8px 8px 0 0; padding: 0 11px 0 7px; position: relative; }
.tab.current::before, .tab.current::after { content: ""; position: absolute; bottom: 0; width: 8px; height: 8px; }
.tab.current::before { left: -8px; background: radial-gradient(circle at 0 0, transparent 7.500px, #f7f7f7 8px); }
.tab.current::after { right: -8px; background: radial-gradient(circle at 100% 0, transparent 7.500px, #f7f7f7 8px); }
.tab-name { flex: 1; margin-left: 9px; line-height: 16px; }
.fade { margin-left: 10px; overflow: hidden; margin-right: 9px; letter-spacing: 0.03px; -webkit-mask-image: linear-gradient(90deg, #000 150px, transparent 182px); mask-image: linear-gradient(90deg, #000 150px, transparent 182px); }
.plus { margin: 6px 0 0 15px; }
.controls { margin-left: auto; display: flex; }
.controls svg { width: 46px; height: 30px; }

.toolbar { height: 40px; display: flex; align-items: center; padding-left: 6px; }
.cell { width: 44px; height: 40px; }
.cell.narrow { width: 40px; }
.cell.first { margin-left: 6px; }
.sep { width: 1px; height: 16px; background: #cfcfcf; margin: 0 2px 0 3px; }
.address { width: 453px; height: 32px; margin-left: 6px; border: 1px solid #cfcfcf; border-radius: 16px; background: #fff; display: flex; align-items: center; padding: 0 4px 0 19px; }
.url { margin-left: 15px; flex: 1; font-size: 13.200px; color: #767676; }
.url b { font-weight: 400; color: #111; }
.cell40 { width: 40px; height: 30px; }

.page { margin: 0 4px 0 4px; height: 946px; display: flex; position: relative; border-radius: 8px; overflow: hidden; background: #f5f6f7; box-shadow: 0 0 2px #bbb; }
.doc { width: 935px; font-family: Lato, "Open Sans", sans-serif; color: #1b1b32; font-variant-ligatures: none; }
.fcc { height: 38px; background: #0a0a23; display: flex; align-items: center; padding: 0 15px 0 14px; color: #fff; }
.logo { font-family: "Liberation Mono", monospace; font-size: 23.700px; line-height: 34px; }
.flame { margin-left: 5px; }
.lang, .menu { height: 28px; border: 1px solid #fff; display: flex; align-items: center; justify-content: center; }
.lang { width: 34px; }
.menu { width: 72px; margin: 0 10px; padding-bottom: 2px; font-size: 18px; }
.column { width: 595px; margin-left: 170px; }
.prev { height: 11px; background: #fff; }
.block { margin-top: 30px; height: 294px; background: #fff; padding: 25px 15px 0; }
h2 { margin: 0; font-size: 27px; font-weight: 700; line-height: 38px; white-space: normal; }
.title { letter-spacing: 0.180px; }
.block p { margin: 21px 0 0; font-size: 20.800px; line-height: 27px; color: #0a0a23; }
.block p + p { margin-top: 22px; }
.projects { list-style: none; margin: 3px 0 0; padding: 0; background: #fff; }
.projects li { height: 49px; display: flex; align-items: center; justify-content: space-between; padding: 0 15px; font-size: 20px; letter-spacing: 0.210px; }
.projects span { padding-bottom: 2px; }
.hover { background: #dfdfe2; }
.claim { margin-top: 31px; height: 45px; border: 3px solid #1b1b32; background: #d0d0d5; text-align: center; font-size: 17.700px; line-height: 39px; }
.browse { margin-top: 60px; text-align: center; line-height: 38.500px; }
h3 { margin: 51px 0 0; font-size: 22.500px; line-height: 34px; }
.scroll { width: 15px; background: #fcfcfc; display: flex; flex-direction: column; align-items: center; padding: 8px 0; }
.thumb { width: 9px; height: 91px; border-radius: 5px; background: #858585; margin: 484px 0 auto; }
.status { position: absolute; left: 0; bottom: 0; width: 315px; height: 22px; background: #cdcdcd; border-radius: 0 4px 0 8px; padding: 1px 0 0 5px; font-size: 11.400px; line-height: 22px; color: #111; }

.settings { width: 960px; height: 1032px; overflow: hidden; border: 1px solid #757575; background: linear-gradient(90deg, #d4d4d4 0, #e4e4e4 7px, #eeeeee 17px, #f3f3f3 32px); }
.titlebar { height: 48px; display: flex; align-items: center; padding-left: 18px; }
.name12 { margin-left: 20px; font-size: 11.500px; }
.titlebar .controls { margin-top: -16px; }
.panes { display: flex; }
aside { width: 280px; margin-left: 16px; padding-top: 9px; }
.user { display: flex; align-items: center; }
.user > div { margin-left: 12px; padding-top: 2px; }
.who { font-weight: 600; font-size: 13.200px; line-height: 18px; color: #000; }
.mail { font-size: 11.300px; line-height: 17px; color: #000; }
.find { margin-top: 24px; width: 280px; height: 32px; background: #fbfbfb; border: 1px solid #e5e5e5; border-bottom-color: #868686; border-radius: 4px; display: flex; align-items: center; justify-content: space-between; padding: 0 12px 0 10px; color: #666; }
nav { margin-top: 22px; }
.nav-item { height: 36px; margin-bottom: 4px; border-radius: 4px; display: flex; align-items: center; padding-left: 10px; position: relative; }
.nav-item svg { margin-top: -2px; }
.nav-item span { margin-left: 14px; padding-top: 2px; letter-spacing: 0.120px; }
.nav-item.active { background: #e9e9e9; }
.nav-item.active::before { content: ""; position: absolute; left: 0; top: 10px; width: 3px; height: 16px; border-radius: 2px; background: #005fb8; }
.content { margin-left: 30px; width: 608px; }
.crumb { height: 63px; padding-top: 7px; margin-left: -2px; display: flex; align-items: flex-start; font-size: 26.400px; font-weight: 600; line-height: 40px; }
.crumb svg { margin: 14px 17px 0 18px; }
.parent { color: #5d5d5d; }
.card { border: 1px solid #e5e5e5; border-radius: 4px; background: #fbfbfb; margin-bottom: 3px; overflow: hidden; }
.pc { height: 69px; display: flex; align-items: center; justify-content: space-between; padding: 0 16px; }
.pc > div { padding-top: 2px; }
.t14 { line-height: 19px; }
.t12 { font-size: 11.500px; line-height: 16px; color: #5f5f5f; letter-spacing: 0.070px; }
.btn { display: flex; align-items: center; justify-content: center; height: 32px; border: 1px solid #e5e5e5; border-bottom-color: #ccc; border-radius: 4px; background: #fefefe; }
.rename { width: 130px; }
.head { height: 68px; display: flex; align-items: center; padding: 0 18px 0 17px; border-bottom: 1px solid #e5e5e5; }
.head .t14 { margin-left: 21px; padding-top: 2px; }
.copy { width: 90px; margin-right: 14px; padding-left: 2px; }
.specs { height: 194px; padding: 7px 0 0 58px; border-bottom: 1px solid #e5e5e5; }
.spec { display: flex; line-height: 25px; }
.label { width: 114px; color: #000; }
.value { color: #666; width: 297px; }
.device .spec:nth-child(2) .value { letter-spacing: 0.170px; }
.device .spec:nth-child(5) .value { letter-spacing: 0.150px; }
.win .spec:nth-child(5) .value { letter-spacing: -0.120px; }
.extra { color: #666; }
.win { height: 185px; border: 0; }
.terms { padding: 2px 0 0 1px; }
.terms a { display: block; line-height: 21px; }
a { color: #003e92; }
.links { height: 57px; display: flex; align-items: center; gap: 22px; padding: 0 16px 3px; background: #f3f3f3; }
.links b { font-weight: 600; letter-spacing: -0.080px; }
.related { font-weight: 600; height: 56px; padding-top: 29px; line-height: 20px; letter-spacing: -0.080px; }
.more { height: 69px; display: flex; align-items: center; padding: 0 17px; }
.more .grow { margin-left: 20px; padding-top: 2px; }

.taskbar { height: 48px; position: relative; font-size: 11.600px; background: linear-gradient(90deg, #e9e1f0 0, #e2e3f1 100px, #e6e9f6 370px, #dedae8 450px, #dee2ef 560px, #dedbe9 640px, #dde2f0 900px, #e0e1ee 1000px, #ece0ee 1120px, #f5e2ed 1200px, #f5e4ee 1270px, #eef0f3 1340px, #e9ebf8 1500px, #ece9f6 1750px, #f3e7f1 1850px, #f3eaf6 1920px); display: flex; }
.weather { width: 573px; display: flex; align-items: center; padding-left: 19px; }
.weather > div { margin-left: 6px; line-height: 16px; }
.dim { color: #5c5c66; letter-spacing: 0.080px; }
.dock { display: flex; align-items: center; }
.search { margin-left: 12px; width: 219px; height: 31px; border-radius: 16px; background: #f4f5fa; border: 1px solid #d5d7e3; border-bottom-color: #bfc2d0; display: flex; align-items: center; padding: 0 9px 0 10px; font-size: 13.200px; color: #5a5a5a; }
.search span { margin-left: 10px; flex: 1; }
.view { margin: 0 13px; }
.edge { width: 38px; height: 38px; border-radius: 4px; background: #eff3fa; display: flex; align-items: center; justify-content: center; position: relative; }
.edge::after { content: ""; position: absolute; left: 11px; bottom: 0; width: 16px; height: 3px; border-radius: 2px; background: #0a74d1; }
.app { width: 44px; height: 48px; display: flex; align-items: center; justify-content: center; position: relative; }
.edge + .app { margin-left: 3px; }
.app i { position: absolute; left: 19px; bottom: 5px; width: 6px; height: 3px; border-radius: 2px; background: #858288; }
.tray { margin-left: auto; display: flex; align-items: center; padding-right: 19px; }
.eng { margin: 0 17px 0 21px; }
.speaker { margin-left: 7px; }
.clock { width: 71px; text-align: right; line-height: 16px; }
.bell { margin-left: 9px; }
</style>
